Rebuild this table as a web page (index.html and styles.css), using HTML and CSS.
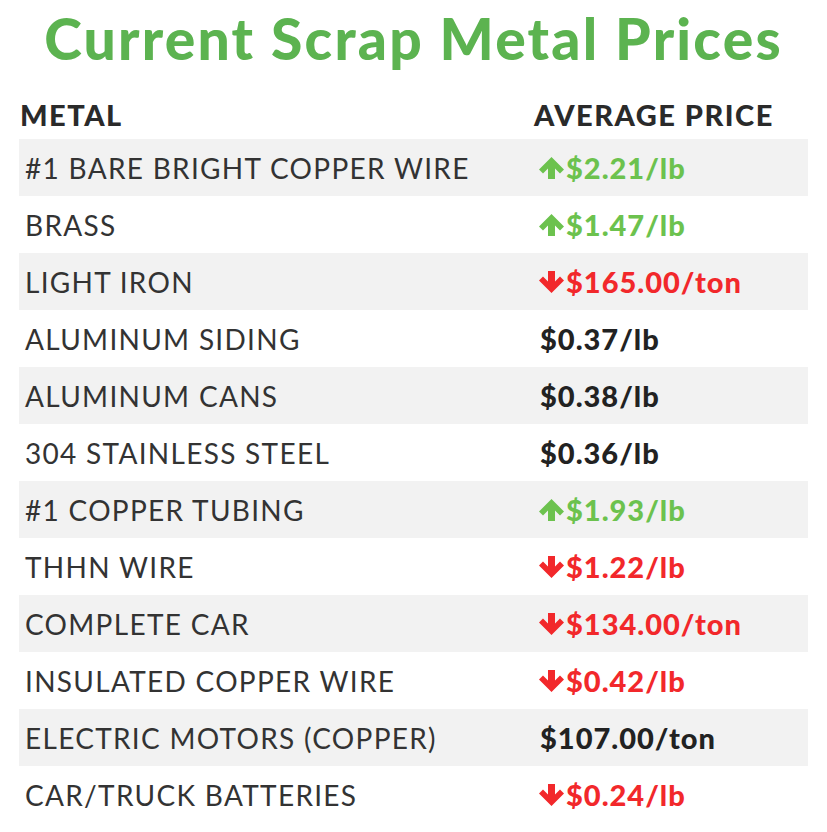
FILE: index.html
```html
<!DOCTYPE html>
<html>
<head>
<meta charset="utf-8">
<link rel="stylesheet" href="styles.css">
</head>
<body>
<div class="page">
  <h1 class="title">Current Scrap Metal Prices</h1>
  <div class="table">
    <div class="head"><span class="c1">METAL</span><span class="c2">AVERAGE PRICE</span></div>
    <div class="row"><span class="name">#1 BARE BRIGHT COPPER WIRE</span><span class="price up"><svg class="arrow" viewBox="0 0 27 22"><path d="M13.5 0 L26 12.5 L22 16.5 L17 11.5 L17 22 L10 22 L10 11.5 L5 16.5 L1 12.5 Z"/></svg>$2.21/lb</span></div>
    <div class="row"><span class="name">BRASS</span><span class="price up"><svg class="arrow" viewBox="0 0 27 22"><path d="M13.5 0 L26 12.5 L22 16.5 L17 11.5 L17 22 L10 22 L10 11.5 L5 16.5 L1 12.5 Z"/></svg>$1.47/lb</span></div>
    <div class="row"><span class="name">LIGHT IRON</span><span class="price down"><svg class="arrow" viewBox="0 0 27 22"><path d="M13.5 22 L26 9.5 L22 5.5 L17 10.5 L17 0 L10 0 L10 10.5 L5 5.5 L1 9.5 Z"/></svg>$165.00/ton</span></div>
    <div class="row"><span class="name">ALUMINUM SIDING</span><span class="price flat">$0.37/lb</span></div>
    <div class="row"><span class="name">ALUMINUM CANS</span><span class="price flat">$0.38/lb</span></div>
    <div class="row"><span class="name">304 STAINLESS STEEL</span><span class="price flat">$0.36/lb</span></div>
    <div class="row"><span class="name">#1 COPPER TUBING</span><span class="price up"><svg class="arrow" viewBox="0 0 27 22"><path d="M13.5 0 L26 12.5 L22 16.5 L17 11.5 L17 22 L10 22 L10 11.5 L5 16.5 L1 12.5 Z"/></svg>$1.93/lb</span></div>
    <div class="row"><span class="name">THHN WIRE</span><span class="price down"><svg class="arrow" viewBox="0 0 27 22"><path d="M13.5 22 L26 9.5 L22 5.5 L17 10.5 L17 0 L10 0 L10 10.5 L5 5.5 L1 9.5 Z"/></svg>$1.22/lb</span></div>
    <div class="row"><span class="name">COMPLETE CAR</span><span class="price down"><svg class="arrow" viewBox="0 0 27 22"><path d="M13.5 22 L26 9.5 L22 5.5 L17 10.5 L17 0 L10 0 L10 10.5 L5 5.5 L1 9.5 Z"/></svg>$134.00/ton</span></div>
    <div class="row"><span class="name">INSULATED COPPER WIRE</span><span class="price down"><svg class="arrow" viewBox="0 0 27 22"><path d="M13.5 22 L26 9.5 L22 5.5 L17 10.5 L17 0 L10 0 L10 10.5 L5 5.5 L1 9.5 Z"/></svg>$0.42/lb</span></div>
    <div class="row"><span class="name">ELECTRIC MOTORS (COPPER)</span><span class="price flat">$107.00/ton</span></div>
    <div class="row"><span class="name">CAR/TRUCK BATTERIES</span><span class="price down"><svg class="arrow" viewBox="0 0 27 22"><path d="M13.5 22 L26 9.5 L22 5.5 L17 10.5 L17 0 L10 0 L10 10.5 L5 5.5 L1 9.5 Z"/></svg>$0.24/lb</span></div>
  </div>
</div>
</body>
</html>
```

FILE: styles.css
```css
html, body {
  margin: 0;
  padding: 0;
  background: #ffffff;
}
.page {
  width: 827px;
  height: 832px;
  font-family: Lato, "Open Sans", sans-serif;
  color: #2e2e2e;
}
.title {
  margin: 0;
  padding-top: 6px;
  height: 84px;
  text-align: center;
  font-size: 57px;
  font-weight: 900;
  letter-spacing: 2.2px;
  color: #5cb350;
  line-height: 64px;
}
.table {
  margin: 0 19px;
}
.head {
  display: grid;
  grid-template-columns: 515px 1fr;
  height: 49px;
  align-items: center;
  font-size: 29px;
  font-weight: 900;
  letter-spacing: 1.5px;
  color: #2a2a2a;
}
.head .c1 { padding-left: 1px; }
.row {
  display: grid;
  grid-template-columns: 519px 1fr;
  height: 57px;
  align-items: center;
}
.row:nth-child(even) {
  background: #f2f2f2;
}
.name {
  padding-left: 6px;
  font-size: 28px;
  letter-spacing: 1.3px;
  color: #333333;
}
.price {
  display: flex;
  align-items: center;
  font-size: 29px;
  font-weight: 900;
  letter-spacing: 1px;
}
.flat { padding-left: 2px; color: #222222; }
.up { color: #6cc24e; }
.down { color: #f2282b; }
.arrow {
  width: 27px;
  height: 22px;
  fill: currentColor;
  margin-right: 1px;
  flex: none;
}
```
